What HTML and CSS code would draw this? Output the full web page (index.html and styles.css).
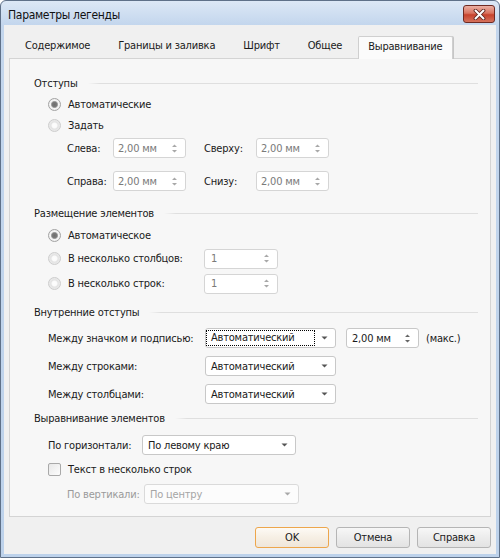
FILE: index.html
```html
<!DOCTYPE html>
<html lang="ru">
<head>
<meta charset="utf-8">
<title>Параметры легенды</title>
<link rel="stylesheet" href="styles.css">
</head>
<body>
<div class="window">
  <div class="titlebar">
    <span class="title">Параметры легенды</span>
    <span class="close">
      <svg width="13" height="11" viewBox="0 0 13 11"><path d="M2.5 1.5 L10.5 9.5 M10.5 1.5 L2.5 9.5" stroke="#5e2820" stroke-width="3.8" stroke-linecap="round"/><path d="M2.5 1.5 L10.5 9.5 M10.5 1.5 L2.5 9.5" stroke="#fff" stroke-width="2" stroke-linecap="round"/></svg>
    </span>
  </div>
  <div class="client">
    <div class="tabs">
      <div class="tab">Содержимое</div>
      <div class="tab">Границы и заливка</div>
      <div class="tab">Шрифт</div>
      <div class="tab">Общее</div>
      <div class="tab active">Выравнивание</div>
    </div>
    <div class="panel">
      <div class="group-head"><span>Отступы</span><i class="rule"></i></div>
      <div class="radio-row r1"><span class="radio checked"></span><span>Автоматические</span></div>
      <div class="radio-row"><span class="radio off"></span><span>Задать</span></div>
      <div class="pad-grid">
        <span>Слева:</span>
        <span class="spin dis"><span>2,00 мм</span><svg class="arrows" width="7" height="11" viewBox="0 0 7 11"><path d="M1 4 L3.5 1.5 L6 4Z M1 7 L3.5 9.5 L6 7Z" fill="#a8a8a8"/></svg></span>
        <span class="gap-lbl">Сверху:</span>
        <span class="spin dis"><span>2,00 мм</span><svg class="arrows" width="7" height="11" viewBox="0 0 7 11"><path d="M1 4 L3.5 1.5 L6 4Z M1 7 L3.5 9.5 L6 7Z" fill="#a8a8a8"/></svg></span>
        <span>Справа:</span>
        <span class="spin dis"><span>2,00 мм</span><svg class="arrows" width="7" height="11" viewBox="0 0 7 11"><path d="M1 4 L3.5 1.5 L6 4Z M1 7 L3.5 9.5 L6 7Z" fill="#a8a8a8"/></svg></span>
        <span class="gap-lbl">Снизу:</span>
        <span class="spin dis"><span>2,00 мм</span><svg class="arrows" width="7" height="11" viewBox="0 0 7 11"><path d="M1 4 L3.5 1.5 L6 4Z M1 7 L3.5 9.5 L6 7Z" fill="#a8a8a8"/></svg></span>
      </div>

      <div class="group-head g2"><span>Размещение элементов</span><i class="rule"></i></div>
      <div class="radio-row r2"><span class="radio checked"></span><span>Автоматическое</span></div>
      <div class="radio-row r-spin1"><span class="radio off"></span><span class="lbl-cols">В несколько столбцов:</span>
        <span class="spin dis s2"><span>1</span><svg class="arrows" width="7" height="11" viewBox="0 0 7 11"><path d="M1 4 L3.5 1.5 L6 4Z M1 7 L3.5 9.5 L6 7Z" fill="#a8a8a8"/></svg></span></div>
      <div class="radio-row r-spin2"><span class="radio off"></span><span class="lbl-cols">В несколько строк:</span>
        <span class="spin dis s2"><span>1</span><svg class="arrows" width="7" height="11" viewBox="0 0 7 11"><path d="M1 4 L3.5 1.5 L6 4Z M1 7 L3.5 9.5 L6 7Z" fill="#a8a8a8"/></svg></span></div>

      <div class="group-head g3"><span>Внутренние отступы</span><i class="rule"></i></div>
      <div class="form-row f1">
        <span class="lbl-inner">Между значком и подписью:</span>
        <span class="combo"><span class="focus">Автоматический</span><svg class="drop" width="7" height="4" viewBox="0 0 7 4"><path d="M0.5 0.5 L6.5 0.5 L3.5 3.5Z" fill="#555"/></svg></span>
        <span class="spin s3"><span>2,00 мм</span><svg class="arrows" width="7" height="11" viewBox="0 0 7 11"><path d="M1 4 L3.5 1.5 L6 4Z M1 7 L3.5 9.5 L6 7Z" fill="#666"/></svg></span>
        <span class="maks">(макс.)</span>
      </div>
      <div class="form-row f2">
        <span class="lbl-inner">Между строками:</span>
        <span class="combo"><span class="val">Автоматический</span><svg class="drop" width="7" height="4" viewBox="0 0 7 4"><path d="M0.5 0.5 L6.5 0.5 L3.5 3.5Z" fill="#555"/></svg></span>
      </div>
      <div class="form-row f2">
        <span class="lbl-inner">Между столбцами:</span>
        <span class="combo"><span class="val">Автоматический</span><svg class="drop" width="7" height="4" viewBox="0 0 7 4"><path d="M0.5 0.5 L6.5 0.5 L3.5 3.5Z" fill="#555"/></svg></span>
      </div>

      <div class="group-head g4"><span>Выравнивание элементов</span><i class="rule"></i></div>
      <div class="form-row h1">
        <span class="lbl-h">По горизонтали:</span>
        <span class="combo wide"><span class="val">По левому краю</span><svg class="drop" width="7" height="4" viewBox="0 0 7 4"><path d="M0.5 0.5 L6.5 0.5 L3.5 3.5Z" fill="#555"/></svg></span>
      </div>
      <div class="radio-row chk-row"><span class="check"></span><span>Текст в несколько строк</span></div>
      <div class="form-row v1">
        <span class="lbl-v">По вертикали:</span>
        <span class="combo wide dis"><span class="val">По центру</span><svg class="drop" width="7" height="4" viewBox="0 0 7 4"><path d="M0.5 0.5 L6.5 0.5 L3.5 3.5Z" fill="#a8a8a8"/></svg></span>
      </div>
    </div>
    <div class="footer">
      <span class="btn default">OK</span>
      <span class="btn">Отмена</span>
      <span class="btn">Справка</span>
    </div>
  </div>
</div>
</body>
</html>
```

FILE: styles.css
```css
* { box-sizing: border-box; }
html, body { margin: 0; padding: 0; }
body {
  width: 500px;
  height: 558px;
  overflow: hidden;
  background: #ffffff;
  font-family: "DejaVu Sans Condensed", "DejaVu Sans", sans-serif;
  font-stretch: semi-condensed;
  font-size: 11px;
  letter-spacing: -0.2px;
  color: #1a1a1a;
}
.window {
  width: 500px;
  height: 558px;
  display: flex;
  flex-direction: column;
  border: 1px solid #5f7189;
  border-radius: 6px 6px 0 0;
  background: linear-gradient(#dce8f6, #c3d6ed 24px, #bdd2eb);
  padding: 0 3px 3px;
}
.titlebar {
  height: 24px;
  display: flex;
  align-items: center;
  justify-content: space-between;
}
.title {
  padding: 4px 0 0 4px;
  font-size: 12px;
  letter-spacing: -0.3px;
  color: #111;
}
.close {
  width: 32px;
  height: 18px;
  margin: 2px 1px 0 0;
  border: 1px solid #6e2a22;
  border-radius: 3px;
  background: linear-gradient(#eab0a3, #d9735f 45%, #c7422c 55%, #d5725c);
  display: flex;
  align-items: center;
  justify-content: center;
}
.client {
  flex: 1;
  background: #f0f0f0;
  display: flex;
  flex-direction: column;
}
.tabs {
  display: flex;
  height: 23px;
  margin: 11px 0 -1px 7px;
}
.tab {
  padding: 0 14px;
  line-height: 19px;
  white-space: nowrap;
}
.tab.active {
  position: relative;
  z-index: 1;
  margin-left: 2px;
  padding: 0 10px 0 9px;
  background: #fbfbfb;
  border: 1px solid #cfcfcf;
  border-bottom: none;
  border-radius: 2px 2px 0 0;
  box-shadow: 1px 0 0 #c6c6c6;
  line-height: 19px;
}
.panel {
  margin: 0 5px;
  border: 1px solid #d4d4d4;
  background: #f7f7f7;
  padding: 14px 12px 12px 24px;
  display: flex;
  flex-direction: column;
}
.group-head {
  height: 20px;
  display: flex;
  align-items: center;
  gap: 10px;
}
.rule {
  flex: 1;
  height: 1px;
  background: linear-gradient(to right, rgba(222,222,222,0), #dfdfdf 12px, #dfdfdf);
}
.g2 { margin-top: 12px; }
.g3 { margin-top: 8px; }
.g4 { margin-top: 4px; }
.radio-row {
  height: 21px;
  display: flex;
  align-items: center;
  padding-left: 14px;
  white-space: nowrap;
}
.radio-row .radio, .radio-row .check { margin-right: 7px; flex: none; }
.r1 { margin-top: 1px; }
.r2 { margin-top: 2px; }
.radio {
  width: 13px;
  height: 13px;
  border-radius: 50%;
  border: 1px solid #a3a3a3;
  background: radial-gradient(circle, #fbfbfb 0, #e9e9e9 100%);
}
.radio.checked {
  background: radial-gradient(circle, #6e6e6e 0, #7c7c7c 2.4px, #aaaaaa 3.2px, #f6f6f6 3.9px, #e6e6e6 100%);
}
.radio.off {
  border-color: #cdcdcd;
  background: radial-gradient(circle, #fdfdfd 0, #fafafa 2.5px, #e3e3e3 3.5px, #f3f3f3 100%);
}
.check {
  width: 13px;
  height: 13px;
  border: 1px solid #a9a9a9;
  border-radius: 2px;
  background: linear-gradient(135deg, #e8e8e8, #fdfdfd);
}
.pad-grid {
  margin: 2px 0 0 33px;
  display: grid;
  grid-template-columns: 46px 91px 52px 73px;
  grid-auto-rows: 20px;
  row-gap: 13px;
  align-items: center;
}
.spin, .combo {
  height: 20px;
  border: 1px solid #c8c8c8;
  border-radius: 3px;
  background: #fff;
  display: flex;
  align-items: center;
  justify-content: space-between;
  padding: 0 7px 0 4px;
  white-space: nowrap;
  flex: none;
}
.spin { width: 73px; }
.spin.dis { color: #7a7a7a; border-color: #d5d5d5; }
.s2 { width: 74px; padding-left: 6px; }
.lbl-cols { width: 136px; flex: none; }
.r-spin1 { margin-top: 2px; }
.r-spin2 { margin-top: 4px; }
.form-row {
  height: 20px;
  display: flex;
  align-items: center;
  padding-left: 14px;
  white-space: nowrap;
}
.f1 { margin-top: 6px; }
.f2 { margin-top: 8px; }
.lbl-inner { width: 157px; flex: none; }
.combo { width: 131px; padding: 0 7px 0 0; }
.combo .val { padding-left: 5px; }
.focus {
  height: 16px;
  line-height: 14px;
  border: 1px dotted #000;
  padding-left: 4px;
  width: 109px;
}
.s3 { margin-left: 10px; padding-left: 5px; }
.maks { margin-left: 7px; }
.h1 { margin-top: 7px; }
.lbl-h { width: 94px; flex: none; }
.combo.wide { width: 154px; }
.chk-row { margin-top: 4px; }
.v1 { margin-top: 4px; padding-left: 33px; }
.lbl-v { width: 77px; flex: none; color: #9a9a9a; }
.combo.dis { width: 155px; color: #a5a5a5; border-color: #dadada; background: #fcfcfc; }
.footer {
  margin-top: 10px;
  display: flex;
  justify-content: flex-end;
  gap: 7px;
  padding-right: 5px;
}
.btn {
  width: 74px;
  height: 21px;
  border: 1px solid #b5b5b5;
  border-radius: 3px;
  background: linear-gradient(#f7f7f7, #ececec 50%, #e3e3e3);
  display: flex;
  align-items: center;
  justify-content: center;
}
.btn.default {
  border-color: #eda64c;
  background: linear-gradient(#fdfaf5, #f6efe4 50%, #efe6da);
}
```
